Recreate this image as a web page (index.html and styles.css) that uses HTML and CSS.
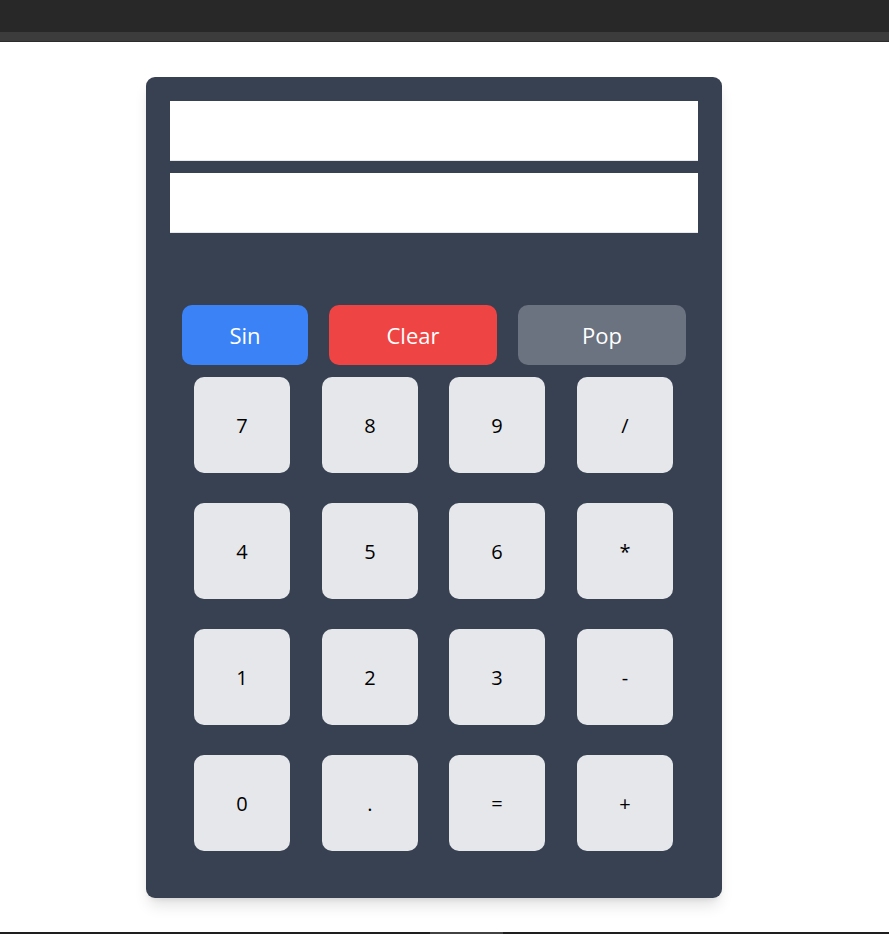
FILE: index.html
```html
<!DOCTYPE html>
<html>
<head>
<meta charset="utf-8">
<link rel="stylesheet" href="styles.css">
</head>
<body>
<div class="chrome-top"></div>
<div class="chrome-sub"></div>
<main class="page">
  <div class="calc">
    <input class="display" type="text">
    <input class="display" type="text">
    <div class="actions">
      <button class="act sin">Sin</button>
      <button class="act clear">Clear</button>
      <button class="act pop">Pop</button>
    </div>
    <div class="keys">
      <button class="key">7</button>
      <button class="key">8</button>
      <button class="key">9</button>
      <button class="key">/</button>
      <button class="key">4</button>
      <button class="key">5</button>
      <button class="key">6</button>
      <button class="key">*</button>
      <button class="key">1</button>
      <button class="key">2</button>
      <button class="key">3</button>
      <button class="key">-</button>
      <button class="key">0</button>
      <button class="key">.</button>
      <button class="key">=</button>
      <button class="key">+</button>
    </div>
  </div>
</main>
<div class="scrollbar"><div class="thumb"></div></div>
</body>
</html>
```

FILE: styles.css
```css
* { box-sizing: border-box; }
html, body { margin: 0; padding: 0; background: #ffffff; }
body {
  font-family: "Open Sans", "Noto Sans", "Liberation Sans", sans-serif;
  width: 889px;
  height: 934px;
  overflow: hidden;
}
.chrome-top { height: 32px; background: #282828; }
.chrome-sub { height: 10px; background: #3c3c3c; border-bottom: 1px solid #2c2c2c; }
.page { padding: 35px 0 0 146px; height: 890px; }
.calc {
  width: 576px;
  height: 821px;
  background: #374151;
  border-radius: 9px;
  padding: 24px;
  box-shadow: 0 10px 15px -3px rgba(0,0,0,0.12), 0 4px 6px -4px rgba(0,0,0,0.12);
  display: flex;
  flex-direction: column;
}
.display {
  display: block;
  width: 528px;
  height: 60px;
  margin: 0 0 12px 0;
  border: none;
  border-bottom: 1px solid #e5e7eb;
  background: #fff;
  outline: none;
  padding: 0 12px;
}
.actions {
  display: flex;
  gap: 21px;
  padding: 0 12px;
  margin-top: 60px;
}
.act {
  height: 60px;
  border: none;
  border-radius: 10px;
  color: #fff;
  font-family: inherit;
  font-size: 22px;
  padding: 0;
}
.sin { width: 126px; background: #3b82f6; }
.clear { width: 168px; background: #ef4444; }
.pop { width: 168px; background: #6b7280; }
.keys {
  display: grid;
  grid-template-columns: 128px 127px 128px 128px;
  grid-auto-rows: 96px;
  row-gap: 30px;
  padding: 0 8px;
  margin-top: 12px;
}
.key {
  width: 96px;
  height: 96px;
  margin-left: 16px;
  border: none;
  border-radius: 10px;
  background: #e5e7eb;
  color: #000;
  font-family: inherit;
  font-size: 20px;
  padding: 0;
}
.scrollbar {
  height: 2px;
  background: #1e1e1e;
  position: relative;
}
.thumb {
  position: absolute;
  left: 430px;
  top: 0;
  width: 73px;
  height: 2px;
  background: #424242;
}
```
